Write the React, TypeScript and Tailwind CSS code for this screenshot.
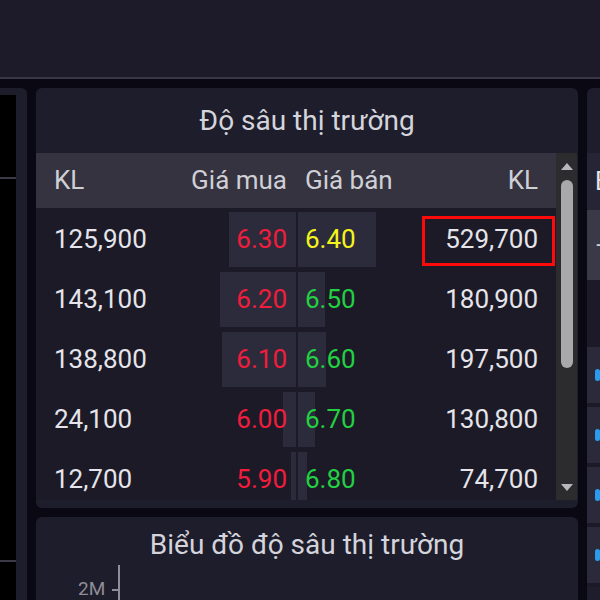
import React from "react";

type Row = {
  bv: string;
  bp: string;
  bw: number;
  sp: string;
  sw: number;
  sv: string;
  yellow?: boolean;
  boxed?: boolean;
};

const rows: Row[] = [
  { bv: "125,900", bp: "6.30", bw: 67, sp: "6.40", sw: 78, sv: "529,700", yellow: true, boxed: true },
  { bv: "143,100", bp: "6.20", bw: 76, sp: "6.50", sw: 27, sv: "180,900" },
  { bv: "138,800", bp: "6.10", bw: 74, sp: "6.60", sw: 28, sv: "197,500" },
  { bv: "24,100", bp: "6.00", bw: 13, sp: "6.70", sw: 17, sv: "130,800" },
  { bv: "12,700", bp: "5.90", bw: 5, sp: "6.80", sw: 9, sv: "74,700" },
];

const gridCols = "grid grid-cols-[134px_126px_2px_124px_134px]";

function DepthRow({ r }: { r: Row }) {
  return (
    <div className={`${gridCols} h-[60px] shrink-0 items-center text-[26px]`}>
      <div className="pl-[18px] text-[#e4e4ea]">{r.bv}</div>
      <div className="relative h-full flex items-center justify-end pr-[9px]">
        <div
          className="absolute right-0 top-[3px] bottom-[2px] bg-[#2c2b3b]"
          style={{ width: r.bw }}
        />
        <span className="relative text-[#f01d3c]">{r.bp}</span>
      </div>
      <div />
      <div className="relative h-full flex items-center pl-[7px]">
        <div
          className="absolute left-0 top-[3px] bottom-[2px] bg-[#2c2b3b]"
          style={{ width: r.sw }}
        />
        <span className={`relative ${r.yellow ? "text-[#f4f41c]" : "text-[#22d042]"}`}>{r.sp}</span>
      </div>
      <div className="relative h-full flex items-center justify-end pr-[18px] text-[#e4e4ea]">
        {r.boxed && (
          <div className="absolute left-0 right-[1px] top-[7px] bottom-[3px] border-[3px] border-[#ff0a0a]" />
        )}
        <span className="relative">{r.sv}</span>
      </div>
    </div>
  );
}

function Scrollbar() {
  return (
    <div className="w-[21px] shrink-0 bg-[#2c2c2f] flex flex-col items-center">
      <div className="h-[27px] w-full flex items-center justify-center">
        <svg width="12" height="7" viewBox="0 0 12 7">
          <polygon points="6,0 12,7 0,7" fill="#b8b8bc" />
        </svg>
      </div>
      <div className="w-[12px] h-[188px] rounded-full bg-[#a9a9ab]" />
      <div className="flex-1" />
      <div className="h-[26px] w-full flex items-center justify-center">
        <svg width="12" height="7" viewBox="0 0 12 7">
          <polygon points="0,0 12,0 6,7" fill="#b8b8bc" />
        </svg>
      </div>
    </div>
  );
}

export default function App() {
  return (
    <div className="w-[600px] h-[600px] overflow-hidden bg-[#0a0913] flex flex-col font-['Roboto',sans-serif]">
      <div className="h-[79px] shrink-0 bg-[#1d1b29] border-b-[2px] border-[#383746]" />
      <div className="flex gap-[9px] pt-[9px] flex-1 min-h-0">
        {/* left panel */}
        <div className="w-[27px] shrink-0 bg-[#1e1d2b] rounded-tr-[6px] pt-[7px] pr-[11px]">
          <div className="h-full bg-black flex flex-col">
            <div className="h-[82px]" />
            <div className="h-[2px] bg-[#3a3948]" />
            <div className="h-[381px]" />
            <div className="h-[2px] bg-[#3a3948]" />
          </div>
        </div>

        {/* middle column */}
        <div className="w-[542px] shrink-0 flex flex-col gap-[9px]">
          <div className="h-[420px] shrink-0 bg-[#1e1d2b] rounded-[6px] flex flex-col overflow-hidden">
            <div className="h-[65px] shrink-0 flex items-center justify-center text-[28px] text-[#d4d4dc]">
              Độ sâu thị trường
            </div>
            <div className="flex h-[347px]">
              <div className="w-[520px] flex flex-col">
                <div className={`${gridCols} h-[55px] shrink-0 items-center bg-[#34333f] text-[26px] text-[#cfcfd6]`}>
                  <div className="pl-[18px]">KL</div>
                  <div className="text-right pr-[9px]">Giá mua</div>
                  <div />
                  <div className="pl-[7px]">Giá bán</div>
                  <div className="text-right pr-[18px]">KL</div>
                </div>
                <div className="flex-1 bg-[#1c1a27] flex flex-col overflow-hidden pt-[1px]">
                  {rows.map((r, i) => (
                    <DepthRow key={i} r={r} />
                  ))}
                </div>
              </div>
              <Scrollbar />
            </div>
          </div>

          <div className="flex-1 bg-[#1e1d2b] rounded-t-[6px] flex flex-col">
            <div className="h-[48px] shrink-0 pt-[8px] flex items-center justify-center text-[28px] text-[#d4d4dc]">
              Biểu đồ độ sâu thị trường
            </div>
            <div className="flex items-start pl-[42px]">
              <span className="text-[19px] leading-none text-[#8e8e98] mt-[14px] mr-[7px]">2M</span>
              <div className="w-[6px] h-[2px] bg-[#8e8e98] mt-[24px]" />
              <div className="w-[2px] h-[40px] bg-[#8e8e98]" />
            </div>
          </div>
        </div>

        {/* right panel */}
        <div className="flex-1 bg-[#1e1d2b] rounded-tl-[6px] flex flex-col overflow-hidden">
          <div className="h-[65px] shrink-0" />
          <div className="h-[57px] shrink-0 bg-[#262535] flex items-center pl-[8px] text-[25px] text-[#e4e4ea]">
            Bước
          </div>
          <div className="h-[70px] shrink-0 bg-[#3a3948] flex items-center pl-[8px] text-[22px] text-[#d0d0d8]">
            –
          </div>
          <div className="h-[67px] shrink-0 bg-[#1c1a27]" />
          {[0, 1, 2, 3].map((i) => (
            <div key={i} className="h-[60px] shrink-0 bg-[#2b2a3a] border-b-[4px] border-[#1c1a27] flex items-center pl-[8px]">
              <div className="w-[8px] h-[12px] rounded-[3px] bg-[#2a9cf0]" />
            </div>
          ))}
        </div>
      </div>
    </div>
  );
}
